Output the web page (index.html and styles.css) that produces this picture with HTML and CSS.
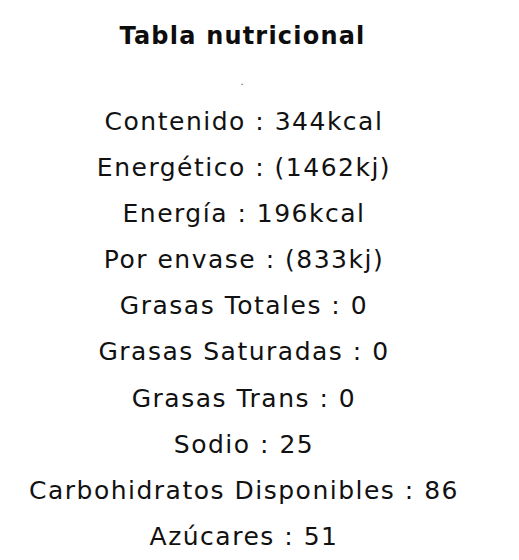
FILE: index.html
```html
<!DOCTYPE html>
<html lang="es">
<head>
<meta charset="utf-8">
<title>Tabla nutricional</title>
<link rel="stylesheet" href="styles.css">
</head>
<body>
<main class="panel">
  <h1 class="title">Tabla nutricional</h1>
  <div class="dot">.</div>
  <ul class="facts">
    <li>Contenido : 344kcal</li>
    <li>Energético : (1462kj)</li>
    <li>Energía : 196kcal</li>
    <li>Por envase : (833kj)</li>
    <li>Grasas Totales : 0</li>
    <li>Grasas Saturadas : 0</li>
    <li>Grasas Trans : 0</li>
    <li>Sodio : 25</li>
    <li>Carbohidratos Disponibles : 86</li>
    <li>Azúcares : 51</li>
  </ul>
</main>
</body>
</html>
```
FILE: styles.css
```css
html, body {
  margin: 0;
  padding: 0;
  background: #ffffff;
}
body {
  font-family: "DejaVu Sans", "Open Sans", sans-serif;
  color: #111111;
}
.panel {
  width: 488px;
  text-align: center;
  padding-top: 18px;
}
.title {
  margin: 0;
  padding-right: 3px;
  font-size: 24px;
  font-weight: 700;
  line-height: 36px;
  letter-spacing: 1.2px;
  color: #0d0d0d;
}
.dot {
  font-size: 10px;
  line-height: 20px;
  margin-top: 18px;
  padding-right: 4px;
  color: #555;
}
.facts {
  list-style: none;
  margin: 7px 0 0;
  padding: 0;
}
.facts li {
  font-size: 25px;
  line-height: 46.1px;
  letter-spacing: 1.5px;
  font-weight: 400;
}
```
